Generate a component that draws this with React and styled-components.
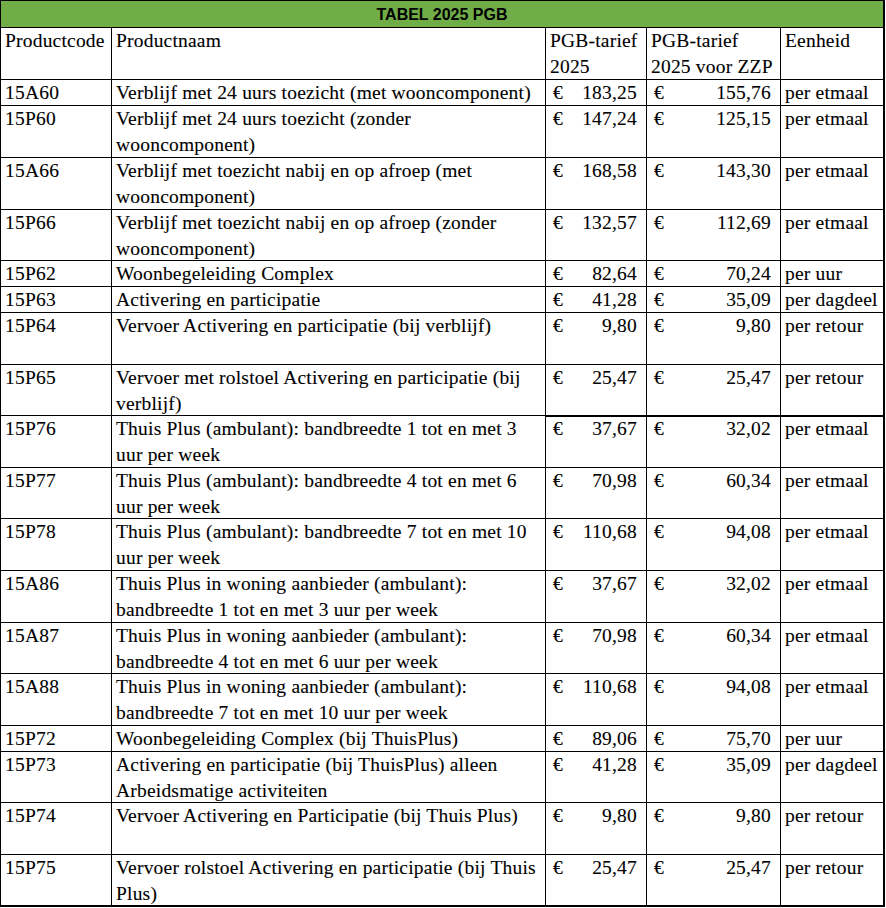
import React from 'react';
import styled, { createGlobalStyle } from 'styled-components';

const GlobalStyle = createGlobalStyle`
  html, body {
    margin: 0;
    padding: 0;
    background: #ffffff;
  }
`;

const COLUMNS = '111px 434px 101px 134px 104px';

const rows = [
    { code: '15A60', name: ['Verblijf met 24 uurs toezicht (met wooncomponent)'], tarief: '183,25', zzp: '155,76', unit: 'per etmaal', h: 26 },
    { code: '15P60', name: ['Verblijf met 24 uurs toezicht (zonder', 'wooncomponent)'], tarief: '147,24', zzp: '125,15', unit: 'per etmaal', h: 52 },
    { code: '15A66', name: ['Verblijf met toezicht nabij en op afroep (met', 'wooncomponent)'], tarief: '168,58', zzp: '143,30', unit: 'per etmaal', h: 52 },
    { code: '15P66', name: ['Verblijf met toezicht nabij en op afroep (zonder', 'wooncomponent)'], tarief: '132,57', zzp: '112,69', unit: 'per etmaal', h: 51 },
    { code: '15P62', name: ['Woonbegeleiding Complex'], tarief: '82,64', zzp: '70,24', unit: 'per uur', h: 26 },
    { code: '15P63', name: ['Activering en participatie'], tarief: '41,28', zzp: '35,09', unit: 'per dagdeel', h: 26 },
    { code: '15P64', name: ['Vervoer Activering en participatie (bij verblijf)'], tarief: '9,80', zzp: '9,80', unit: 'per retour', h: 52 },
    { code: '15P65', name: ['Vervoer met rolstoel Activering en participatie (bij', 'verblijf)'], tarief: '25,47', zzp: '25,47', unit: 'per retour', h: 51 },
    { code: '15P76', name: ['Thuis Plus (ambulant): bandbreedte 1 tot en met 3', 'uur per week'], tarief: '37,67', zzp: '32,02', unit: 'per etmaal', h: 52, ruled: true },
    { code: '15P77', name: ['Thuis Plus (ambulant): bandbreedte 4 tot en met 6', 'uur per week'], tarief: '70,98', zzp: '60,34', unit: 'per etmaal', h: 51 },
    { code: '15P78', name: ['Thuis Plus (ambulant): bandbreedte 7 tot en met 10', 'uur per week'], tarief: '110,68', zzp: '94,08', unit: 'per etmaal', h: 52 },
    { code: '15A86', name: ['Thuis Plus in woning aanbieder (ambulant):', 'bandbreedte 1 tot en met 3 uur per week'], tarief: '37,67', zzp: '32,02', unit: 'per etmaal', h: 52 },
    { code: '15A87', name: ['Thuis Plus in woning aanbieder (ambulant):', 'bandbreedte 4 tot en met 6 uur per week'], tarief: '70,98', zzp: '60,34', unit: 'per etmaal', h: 51 },
    { code: '15A88', name: ['Thuis Plus in woning aanbieder (ambulant):', 'bandbreedte 7 tot en met 10 uur per week'], tarief: '110,68', zzp: '94,08', unit: 'per etmaal', h: 52 },
    { code: '15P72', name: ['Woonbegeleiding Complex (bij ThuisPlus)'], tarief: '89,06', zzp: '75,70', unit: 'per uur', h: 26 },
    { code: '15P73', name: ['Activering en participatie (bij ThuisPlus) alleen', 'Arbeidsmatige activiteiten'], tarief: '41,28', zzp: '35,09', unit: 'per dagdeel', h: 51 },
    { code: '15P74', name: ['Vervoer Activering en Participatie (bij Thuis Plus)'], tarief: '9,80', zzp: '9,80', unit: 'per retour', h: 52 },
    { code: '15P75', name: ['Vervoer rolstoel Activering en participatie (bij Thuis', 'Plus)'], tarief: '25,47', zzp: '25,47', unit: 'per retour', h: 51, last: true },
];

const Lines = ({ items }) => items.map((line, i) => <Line key={i}>{line}</Line>);

const Amount = ({ value, ruled }) => (
    <AmountCell $ruled={ruled}>
        <span>€</span>
        <span>{value}</span>
    </AmountCell>
);

export default function App() {
    return (
        <>
            <GlobalStyle />
            <Sheet>
                <TitleRow>TABEL 2025 PGB</TitleRow>
                <Row $h={52}>
                    <Cell>Productcode</Cell>
                    <Cell>Productnaam</Cell>
                    <Cell><Lines items={['PGB-tarief', '2025']} /></Cell>
                    <Cell><Lines items={['PGB-tarief', '2025 voor ZZP']} /></Cell>
                    <Cell $edge>Eenheid</Cell>
                </Row>
                {rows.map((r) => (
                    <Row key={r.code} $h={r.h} $last={r.last}>
                        <Cell>{r.code}</Cell>
                        <Cell><Lines items={r.name} /></Cell>
                        <Amount value={r.tarief} ruled={r.ruled} />
                        <Amount value={r.zzp} ruled={r.ruled} />
                        <Cell $edge $ruled={r.ruled}>{r.unit}</Cell>
                    </Row>
                ))}
            </Sheet>
        </>
    );
}

const Sheet = styled.div`
    display: flex;
    flex-direction: column;
    width: 885px;
    border-left: 1px solid #000;
    border-top: 1px solid #000;
    box-sizing: border-box;
    font-family: "Liberation Serif", "Times New Roman", serif;
    font-size: 19.5px;
    line-height: 25.7px;
    letter-spacing: 0.2px;
    color: #000;
    -webkit-text-stroke: 0.1px #000;
`;

const TitleRow = styled.div`
    height: 27px;
    box-sizing: border-box;
    display: flex;
    align-items: center;
    justify-content: center;
    background: #70ad47;
    border-bottom: 1px solid #000;
    border-right: 2px solid #000;
    font-family: "Liberation Sans", Arial, sans-serif;
    font-weight: bold;
    font-size: 16px;
    letter-spacing: 0;
    padding-top: 1px;
    color: #000;
    -webkit-text-stroke: 0;
`;

const Row = styled.div`
    display: grid;
    grid-template-columns: ${COLUMNS};
    height: ${(p) => p.$h + (p.$last ? 1 : 0)}px;
    box-sizing: border-box;
    border-bottom: ${(p) => (p.$last ? 2 : 1)}px solid #000;
`;

const Cell = styled.div`
    box-sizing: border-box;
    border-right: ${(p) => (p.$edge ? 2 : 1)}px solid #000;
    padding: 0 3px 0 4px;
    white-space: nowrap;
    box-shadow: ${(p) => (p.$ruled ? 'inset 0 1px 0 #000' : 'none')};
`;

const AmountCell = styled.div`
    box-sizing: border-box;
    display: flex;
    justify-content: space-between;
    border-right: 1px solid #000;
    padding: 0 9px 0 7px;
    white-space: nowrap;
    box-shadow: ${(p) => (p.$ruled ? 'inset 0 1px 0 #000' : 'none')};
`;

const Line = styled.div`
    white-space: nowrap;
`;
